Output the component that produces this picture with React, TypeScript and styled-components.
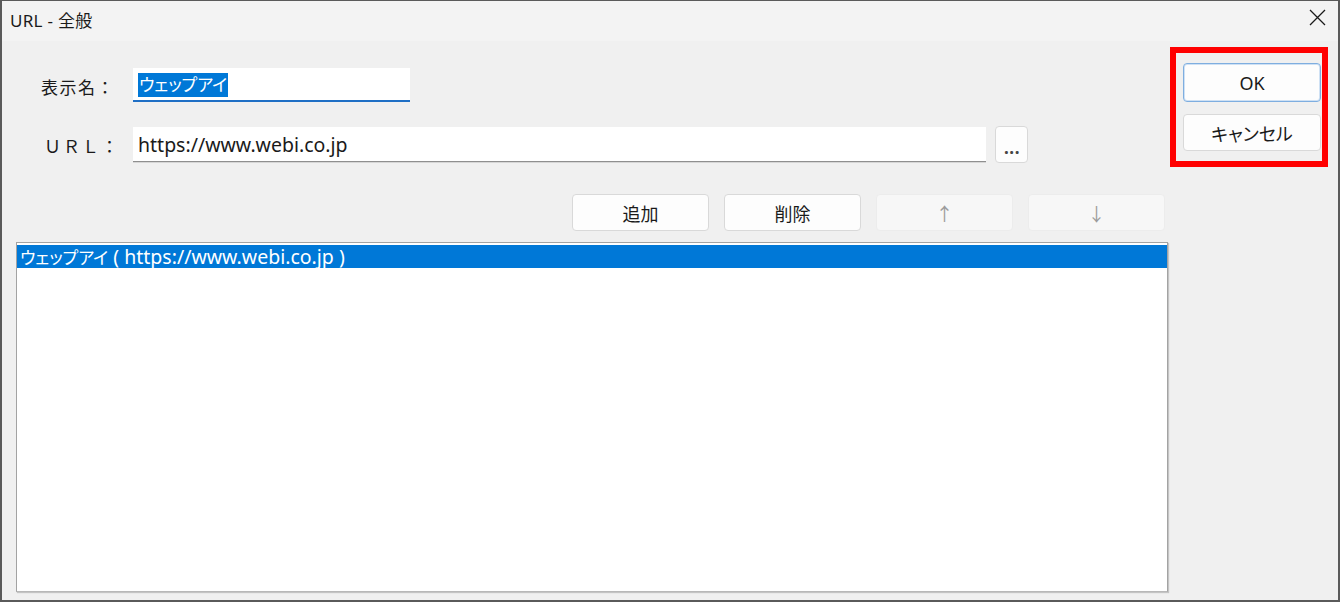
import React from 'react';
import styled, { createGlobalStyle } from 'styled-components';

const GlobalStyle = createGlobalStyle`
    html, body {
        margin: 0;
        padding: 0;
        background: #ffffff;
    }
    * {
        box-sizing: border-box;
    }
`;

const FONT = `"Noto Sans", "Noto Sans CJK JP", sans-serif`;

const StyledWindow = styled.div`
    width: 1340px;
    height: 602px;
    border: 2px solid #5a5a5a;
    border-top-width: 1px;
    background: #f0f0f0;
    display: flex;
    flex-direction: column;
    font-family: ${FONT};
    font-feature-settings: 'palt';
    color: #1a1a1a;
    overflow: hidden;
`;

const StyledTitleBar = styled.div`
    height: 40px;
    flex: 0 0 40px;
    background: #f3f3f3;
    display: flex;
    align-items: center;
    justify-content: space-between;
    padding: 0 10px 3px 8px;
    & .title {
        font-size: 17px;
        letter-spacing: 0.3px;
    }
`;

const StyledClose = styled.button`
    width: 22px;
    height: 22px;
    padding: 0;
    border: none;
    background: transparent;
    display: flex;
    align-items: center;
    justify-content: center;
    margin-top: -4px;
`;

const StyledBody = styled.div`
    flex: 1;
    display: flex;
    align-items: flex-start;
    padding-left: 14px;
`;

const StyledMain = styled.div`
    width: 1152px;
    display: flex;
    flex-direction: column;
`;

const StyledFormRow = styled.div<{ $top: number; $height: number }>`
    display: flex;
    align-items: flex-end;
    margin-top: ${(p) => p.$top}px;
    height: ${(p) => p.$height}px;
    padding-left: 25px;
`;

const StyledLabel = styled.div<{ $spaced?: boolean }>`
    width: 92px;
    font-size: 17px;
    font-feature-settings: normal;
    align-self: center;
    letter-spacing: ${(p) => (p.$spaced ? '2px' : '1.5px')};
    padding-left: ${(p) => (p.$spaced ? '3px' : '0')};
    margin-top: 2px;
`;

const StyledInput = styled.div<{ $width: number; $focused?: boolean }>`
    width: ${(p) => p.$width}px;
    height: ${(p) => (p.$focused ? 34 : 35)}px;
    background: #ffffff;
    border-bottom: ${(p) => (p.$focused ? '2px solid #1f6fc5' : '1px solid #8f8f8f')};
    box-shadow: ${(p) => (p.$focused ? 'none' : '0 1px 0 #d6d6d6')};
    display: flex;
    align-items: center;
    padding-left: 5px;
    font-size: 17px;
    color: #1a1a1a;
    & .selected {
        background: #0078d7;
        color: #ffffff;
        line-height: 24px;
        height: 24px;
        padding: 0 1px;
        margin-top: 2px;
    }
    & .url {
        font-family: 'Noto Sans', sans-serif;
        font-size: 19.5px;
        margin-top: 1px;
    }
`;

const StyledBrowse = styled.button`
    width: 33px;
    height: 37px;
    margin-left: 9px;
    background: #fdfdfd;
    border: 1px solid #d9d9d9;
    border-radius: 4px;
    font-family: ${FONT};
    font-size: 17px;
    font-weight: 700;
    color: #444;
    padding: 6px 0 0 1px;
    letter-spacing: 0.5px;
`;

const StyledButtonRow = styled.div`
    display: flex;
    justify-content: flex-end;
    gap: 15px;
    margin-top: 31px;
    padding-right: 3px;
`;

const StyledButton = styled.button<{ $disabled?: boolean; $width?: number; $height?: number; $default?: boolean }>`
    width: ${(p) => p.$width ?? 137}px;
    height: ${(p) => p.$height ?? 37}px;
    border-radius: 4px;
    border: 1px solid ${(p) => (p.$default ? '#7eaee0' : p.$disabled ? '#ececec' : '#d9d9d9')};
    box-shadow: ${(p) => (p.$default ? 'inset 0 0 0 1px #cfe1f4' : 'none')};
    background: ${(p) => (p.$disabled ? '#f7f7f7' : '#fdfdfd')};
    color: ${(p) => (p.$disabled ? '#9c9c9c' : '#1a1a1a')};
    font-family: ${FONT};
    font-feature-settings: 'palt';
    font-size: 18px;
    padding: 0;
    display: flex;
    align-items: center;
    justify-content: center;
`;

const StyledList = styled.div`
    margin-top: 11px;
    height: 350px;
    background: #ffffff;
    border: 1px solid #a3a3a3;
    border-bottom-color: #b8b8b8;
    box-shadow: 1px 1px 1px rgba(0, 0, 0, 0.18);
    padding-top: 2px;
`;

const StyledListItem = styled.div<{ $selected?: boolean }>`
    height: 23px;
    display: flex;
    align-items: center;
    background: ${(p) => (p.$selected ? '#0078d7' : 'transparent')};
    color: ${(p) => (p.$selected ? '#ffffff' : '#1a1a1a')};
    font-size: 17px;
    padding-left: 3px;
    white-space: pre;
    & .url {
        font-family: 'Noto Sans', sans-serif;
        font-size: 19.5px;
        line-height: 23px;
    }
`;

const StyledSide = styled.div`
    margin-left: 2px;
    margin-top: 6px;
    width: 158px;
    height: 120px;
    border: 6px solid #ff0000;
    display: flex;
    flex-direction: column;
    gap: 12px;
    padding: 10px 1px 0 7px;
`;

export default function App() {
    return (
        <>
            <GlobalStyle />
            <StyledWindow>
                <StyledTitleBar>
                    <span className='title'>URL - 全般</span>
                    <StyledClose aria-label='close'>
                        <svg width='17' height='17' viewBox='0 0 17 17'>
                            <path
                                d='M1 1 L16 16 M16 1 L1 16'
                                stroke='#1a1a1a'
                                strokeWidth='1.3'
                            />
                        </svg>
                    </StyledClose>
                </StyledTitleBar>
                <StyledBody>
                    <StyledMain>
                        <StyledFormRow $top={27} $height={34}>
                            <StyledLabel>表示名：</StyledLabel>
                            <StyledInput $width={277} $focused>
                                <span className='selected'>ウェップアイ</span>
                            </StyledInput>
                        </StyledFormRow>
                        <StyledFormRow $top={24} $height={37}>
                            <StyledLabel $spaced>ＵＲＬ：</StyledLabel>
                            <StyledInput $width={853} style={{ marginBottom: 1 }}>
                                <span className='url'>https://www.webi.co.jp</span>
                            </StyledInput>
                            <StyledBrowse>...</StyledBrowse>
                        </StyledFormRow>
                        <StyledButtonRow>
                            <StyledButton>追加</StyledButton>
                            <StyledButton>削除</StyledButton>
                            <StyledButton $disabled>↑</StyledButton>
                            <StyledButton $disabled>↓</StyledButton>
                        </StyledButtonRow>
                        <StyledList>
                            <StyledListItem $selected>
                                <span>ウェップアイ</span>
                                <span className='url'> ( https://www.webi.co.jp )</span>
                            </StyledListItem>
                        </StyledList>
                    </StyledMain>
                    <StyledSide>
                        <StyledButton $width={138} $height={39} $default>
                            OK
                        </StyledButton>
                        <StyledButton $width={138} $height={37}>
                            キャンセル
                        </StyledButton>
                    </StyledSide>
                </StyledBody>
            </StyledWindow>
        </>
    );
}
